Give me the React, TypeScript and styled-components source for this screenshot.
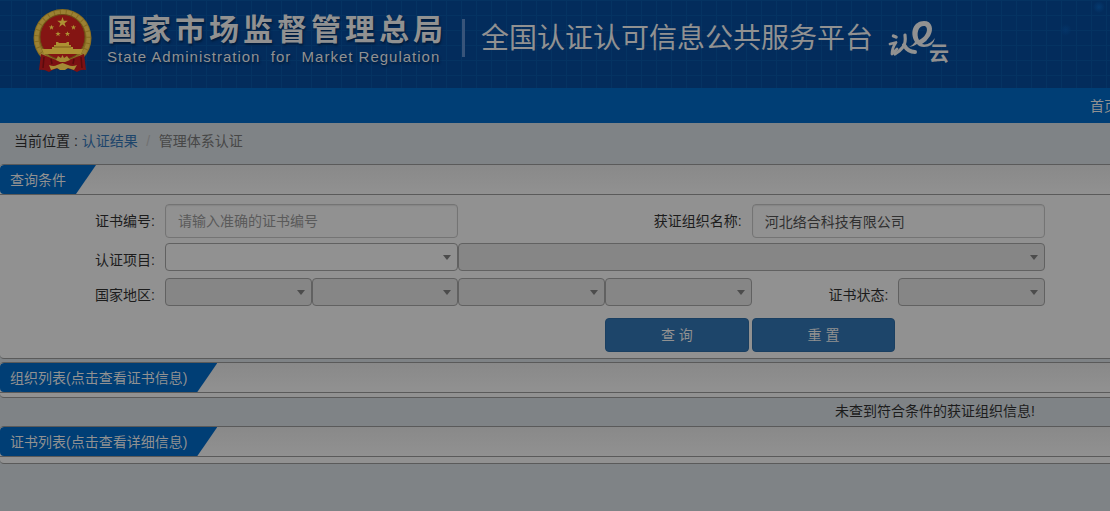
import React from "react";
import styled, { createGlobalStyle } from "styled-components";

const c = {
  page: "#7f8386",
  panel: "#919191",
  line: "#5a5a5a",
  brand: "#003e75",
  light: "#919191",
  ink: "#1c1c1c",
};

const Global = createGlobalStyle`
  *, *::before, *::after { box-sizing: border-box; }
  body {
    margin: 0;
    overflow-x: hidden;
    background: ${c.page};
    color: ${c.ink};
    font: 14px/20px "Liberation Sans", "Noto Sans CJK SC", sans-serif;
  }
  button, input, select { font: inherit; }
`;

const Header = styled.header`
  display: flex;
  align-items: flex-start;
  height: 88px;
  padding-left: 32px;
  overflow: hidden;
  white-space: nowrap;
  color: ${c.light};
  background:
    radial-gradient(circle at 99% 8%, #053a70 0, transparent 6px),
    radial-gradient(circle at 96% 34%, #043468 0, transparent 6px),
    repeating-linear-gradient(90deg, transparent 0 11px, #053362 11px 12px, transparent 12px 15px),
    repeating-linear-gradient(180deg, #053362 0 1px, transparent 1px 15px),
    #032c5c;
`;

const Emblem = styled.svg`
  flex: none;
  margin: 8px 14px 0 0;
`;

const Agency = styled.div`
  flex: none;
  width: 340px;
  padding-top: 11px;
`;

const AgencyName = styled.h1`
  margin: 0;
  font-size: 30px;
  line-height: 38px;
  font-weight: 700;
  letter-spacing: 4px;
  text-shadow: 1px 2px 2px #021c3c;
`;

const AgencyEnglish = styled.p`
  margin: 0;
  font-size: 15px;
  line-height: 16px;
  letter-spacing: 1px;
  white-space: pre;
  text-shadow: 1px 2px 2px #021c3c;
`;

const Divider = styled.span`
  flex: none;
  width: 3px;
  height: 38px;
  margin: 19px 16px 0 15px;
  background: #38547a;
`;

const Platform = styled.h2`
  margin: 19px 14px 0 0;
  font-size: 28px;
  line-height: 40px;
  font-weight: 400;
`;

const CloudLogo = styled.svg`
  flex: none;
  margin-top: 18px;
  fill: ${c.light};
`;

const Nav = styled.nav`
  display: flex;
  justify-content: flex-end;
  align-items: center;
  height: 35px;
  overflow: hidden;
  background: ${c.brand};
  white-space: nowrap;
`;

const NavLink = styled.a`
  margin-right: -8px;
  color: ${c.light};
  text-decoration: none;
`;

const Breadcrumb = styled.nav`
  display: flex;
  padding: 8px 14px 13px;
`;

const CrumbLink = styled.a`
  margin-left: 4px;
  color: #1d456b;
  text-decoration: none;
`;

const Slash = styled.span`
  width: 21px;
  text-align: center;
  color: #717171;
`;

const Current = styled.span`
  color: #474747;
`;

const Panel = styled.section<{ $gap?: number }>`
  margin-bottom: ${(p) => p.$gap ?? 0}px;
  border: solid ${c.line};
  border-width: 1px 0;
  border-radius: 4px 0 0 4px;
  background: ${c.panel};
  overflow: hidden;
`;

const PanelHead = styled.div`
  display: flex;
  height: 30px;
  border-bottom: 1px solid ${c.line};
  background: linear-gradient(#898989, #919191);
`;

const PanelTab = styled.h3`
  margin: 0;
  padding: 0 30px 0 10px;
  font-size: 14px;
  line-height: 30px;
  font-weight: 400;
  color: ${c.light};
  background: ${c.brand};
  border-radius: 4px 0 0 4px;
  clip-path: polygon(0 0, 100% 0, calc(100% - 20px) 100%, 0 100%);
`;

const PanelBody = styled.div<{ $height: number }>`
  min-height: ${(p) => p.$height}px;
`;

const Form = styled.form`
  padding: 9px 65px 6px 0;
`;

const Row = styled.div<{ $gap?: number }>`
  display: grid;
  grid-template-columns: 165px repeat(6, minmax(0, 1fr));
  margin-bottom: ${(p) => p.$gap ?? 0}px;
`;

const Label = styled.label<{ $col?: number; $low?: boolean }>`
  grid-column: ${(p) => p.$col ?? 1};
  align-self: ${(p) => (p.$low ? "end" : "center")};
  padding: 0 10px ${(p) => (p.$low ? 1 : 0)}px 0;
  text-align: right;
  white-space: nowrap;
`;

const TextInput = styled.input<{ $col: string }>`
  grid-column: ${(p) => p.$col};
  width: 100%;
  height: 34px;
  padding: 0 12px;
  border: 1px solid #747474;
  border-radius: 4px;
  background: ${c.panel};
  box-shadow: inset 0 1px 1px #868686;
  color: #303030;
  &::placeholder { color: #5a5a5a; opacity: 1; }
`;

const SelectBox = styled.span<{ $col: string }>`
  grid-column: ${(p) => p.$col};
  position: relative;
  height: 28px;
  &::after {
    content: "";
    position: absolute;
    top: 12px;
    right: 7px;
    border: 4px solid transparent;
    border-top: 5px solid #4c4c4c;
    border-bottom: 0;
    pointer-events: none;
  }
`;

const Select = styled.select`
  display: block;
  appearance: none;
  width: 100%;
  height: 28px;
  padding: 0 20px 0 8px;
  border: 1px solid #616161;
  border-radius: 4px;
  background: ${c.panel};
  color: #303030;
  opacity: 1;
  &:disabled { background: #868686; }
`;

const Action = styled.button<{ $col: number }>`
  grid-column: ${(p) => p.$col};
  height: 34px;
  margin-right: 3px;
  padding: 0;
  border: 1px solid #1a3f61;
  border-radius: 4px;
  background: #1d456a;
  color: ${c.light};
`;

const Empty = styled.p`
  margin: 0;
  padding: 3px 75px 5px 0;
  text-align: right;
`;

function Dropdown({ id, label, col, disabled }: { id: string; label: string; col: string; disabled?: boolean }) {
  return (
    <SelectBox $col={col}>
      <Select id={id} aria-label={label} disabled={disabled}>
        <option value="" />
      </Select>
    </SelectBox>
  );
}

const star = "M0-5 1.2-1.6 4.8-1.6 1.9.6 3 4 0 1.9-3 4-1.9.6-4.8-1.6-1.2-1.6Z";

function NationalEmblem() {
  return (
    <Emblem width="61" height="65" viewBox="0 0 61 65" aria-label="国徽">
      <circle cx="30.500" cy="30" r="29" fill="#866b20" />
      <circle cx="30.500" cy="30" r="26" fill="none" stroke="#9b8133" strokeWidth="4" strokeDasharray="5 1" />
      <circle cx="30.500" cy="29" r="22.500" fill="#841513" stroke="#6b4b16" />
      <g fill="#ad9133">
        <path d={star} transform="translate(30.500 14.500) scale(1.1)" />
        <path d={star} transform="translate(19.500 19.500) scale(.56)" />
        <path d={star} transform="translate(41.500 19.500) scale(.56)" />
        <path d={star} transform="translate(26 26) scale(.56)" />
        <path d={star} transform="translate(35.500 26) scale(.56)" />
        <path d="M24 34 26 34 27 35H34L35 34 37 34V37H39V39H41V41H20V39H22V37H24Z" />
        <path d="M10 41H51L49 46H12Z" />
      </g>
      <path d="M22 39H39" stroke="#7d5a19" strokeWidth="1" />
      <path d="M9 46C14 48 19 50 24 52Q30 55 37 52C42 50 47 48 52 46L54 62Q49 61 45 64 38 60 30.500 60 23 60 17 64 12 61 7 62Z" fill="#7d1113" />
      <path d="M24 52 26 48 29 50 30.500 47 32 50 35 48 38 52 33 54H28Z" fill="#a58a35" />
      <path d="M17 57Q22 59 25 57L30.500 55 36 57Q40 59 45 57L42 62 36 60 33 62H28L25 60 19 62Z" fill="#a58a35" />
      <path d="M12 49 11 60M49 49 50 60M19 51 20 56M42 51 41 56" stroke="#590b0d" strokeWidth="1.500" fill="none" />
    </Emblem>
  );
}

function RenCloud() {
  return (
    <CloudLogo width="64" height="50" viewBox="0 0 64 50" aria-label="认e云">
      <g fill="none" stroke={c.light} strokeLinecap="round" strokeLinejoin="round">
        <path d="M6.500 18 9 19" strokeWidth="3.500" />
        <path d="M3 26 9 24.500Q5 30 5 36L10 31" strokeWidth="2.800" />
        <path d="M18 17Q19 25 16 29T8 36" strokeWidth="3.200" />
        <path d="M17 27Q21 34 28 34" strokeWidth="4" />
      </g>
      <path
        fillRule="evenodd"
        d="M22 29Q26 27 28 24C22 14 27 3 37 3C45 3 47 11 43 18Q40 23 35 26Q42 28 48 20Q46 29 37 29Q32 29 30 26Q26 29 22 29ZM32 22C41 18 42 8 37 8C31 8 29 16 32 22Z"
      />
      <text x="42" y="43" fontSize="20" fontWeight="700" fontFamily='"Noto Sans CJK SC", sans-serif'>云</text>
    </CloudLogo>
  );
}

export default function App() {
  return (
    <>
      <Global />
      <Header>
        <NationalEmblem />
        <Agency>
          <AgencyName>国家市场监督管理总局</AgencyName>
          <AgencyEnglish>{"State Administration  for  Market Regulation"}</AgencyEnglish>
        </Agency>
        <Divider />
        <Platform>全国认证认可信息公共服务平台</Platform>
        <RenCloud />
      </Header>
      <Nav aria-label="主导航">
        <NavLink href="#home">首页</NavLink>
      </Nav>
      <main>
        <Breadcrumb aria-label="当前位置">
          <span>当前位置 :</span>
          <CrumbLink href="#results">认证结果</CrumbLink>
          <Slash>/</Slash>
          <Current>管理体系认证</Current>
        </Breadcrumb>

        <Panel $gap={3}>
          <PanelHead>
            <PanelTab>查询条件</PanelTab>
          </PanelHead>
          <Form onSubmit={(e) => e.preventDefault()}>
            <Row $gap={5}>
              <Label htmlFor="cert-no">证书编号:</Label>
              <TextInput id="cert-no" $col="2 / 4" placeholder="请输入准确的证书编号" />
              <Label htmlFor="org-name" $col={5}>获证组织名称:</Label>
              <TextInput id="org-name" $col="6 / 8" defaultValue="河北络合科技有限公司" />
            </Row>
            <Row $gap={7}>
              <Label htmlFor="project" $low>认证项目:</Label>
              <Dropdown id="project" label="认证项目" col="2 / 4" />
              <Dropdown id="project-sub" label="认证项目细类" col="4 / 8" disabled />
            </Row>
            <Row $gap={12}>
              <Label htmlFor="country" $low>国家地区:</Label>
              <Dropdown id="country" label="国家地区" col="2" disabled />
              <Dropdown id="province" label="省" col="3" disabled />
              <Dropdown id="city" label="市" col="4" disabled />
              <Dropdown id="county" label="县" col="5" disabled />
              <Label htmlFor="status" $col={6} $low>证书状态:</Label>
              <Dropdown id="status" label="证书状态" col="7" disabled />
            </Row>
            <Row>
              <Action type="submit" $col={5}>查 询</Action>
              <Action type="reset" $col={6}>重 置</Action>
            </Row>
          </Form>
        </Panel>

        <Panel>
          <PanelHead>
            <PanelTab>组织列表(点击查看证书信息)</PanelTab>
          </PanelHead>
          <PanelBody $height={4} />
        </Panel>
        <Empty>未查到符合条件的获证组织信息!</Empty>

        <Panel>
          <PanelHead>
            <PanelTab>证书列表(点击查看详细信息)</PanelTab>
          </PanelHead>
          <PanelBody $height={6} />
        </Panel>
      </main>
    </>
  );
}
